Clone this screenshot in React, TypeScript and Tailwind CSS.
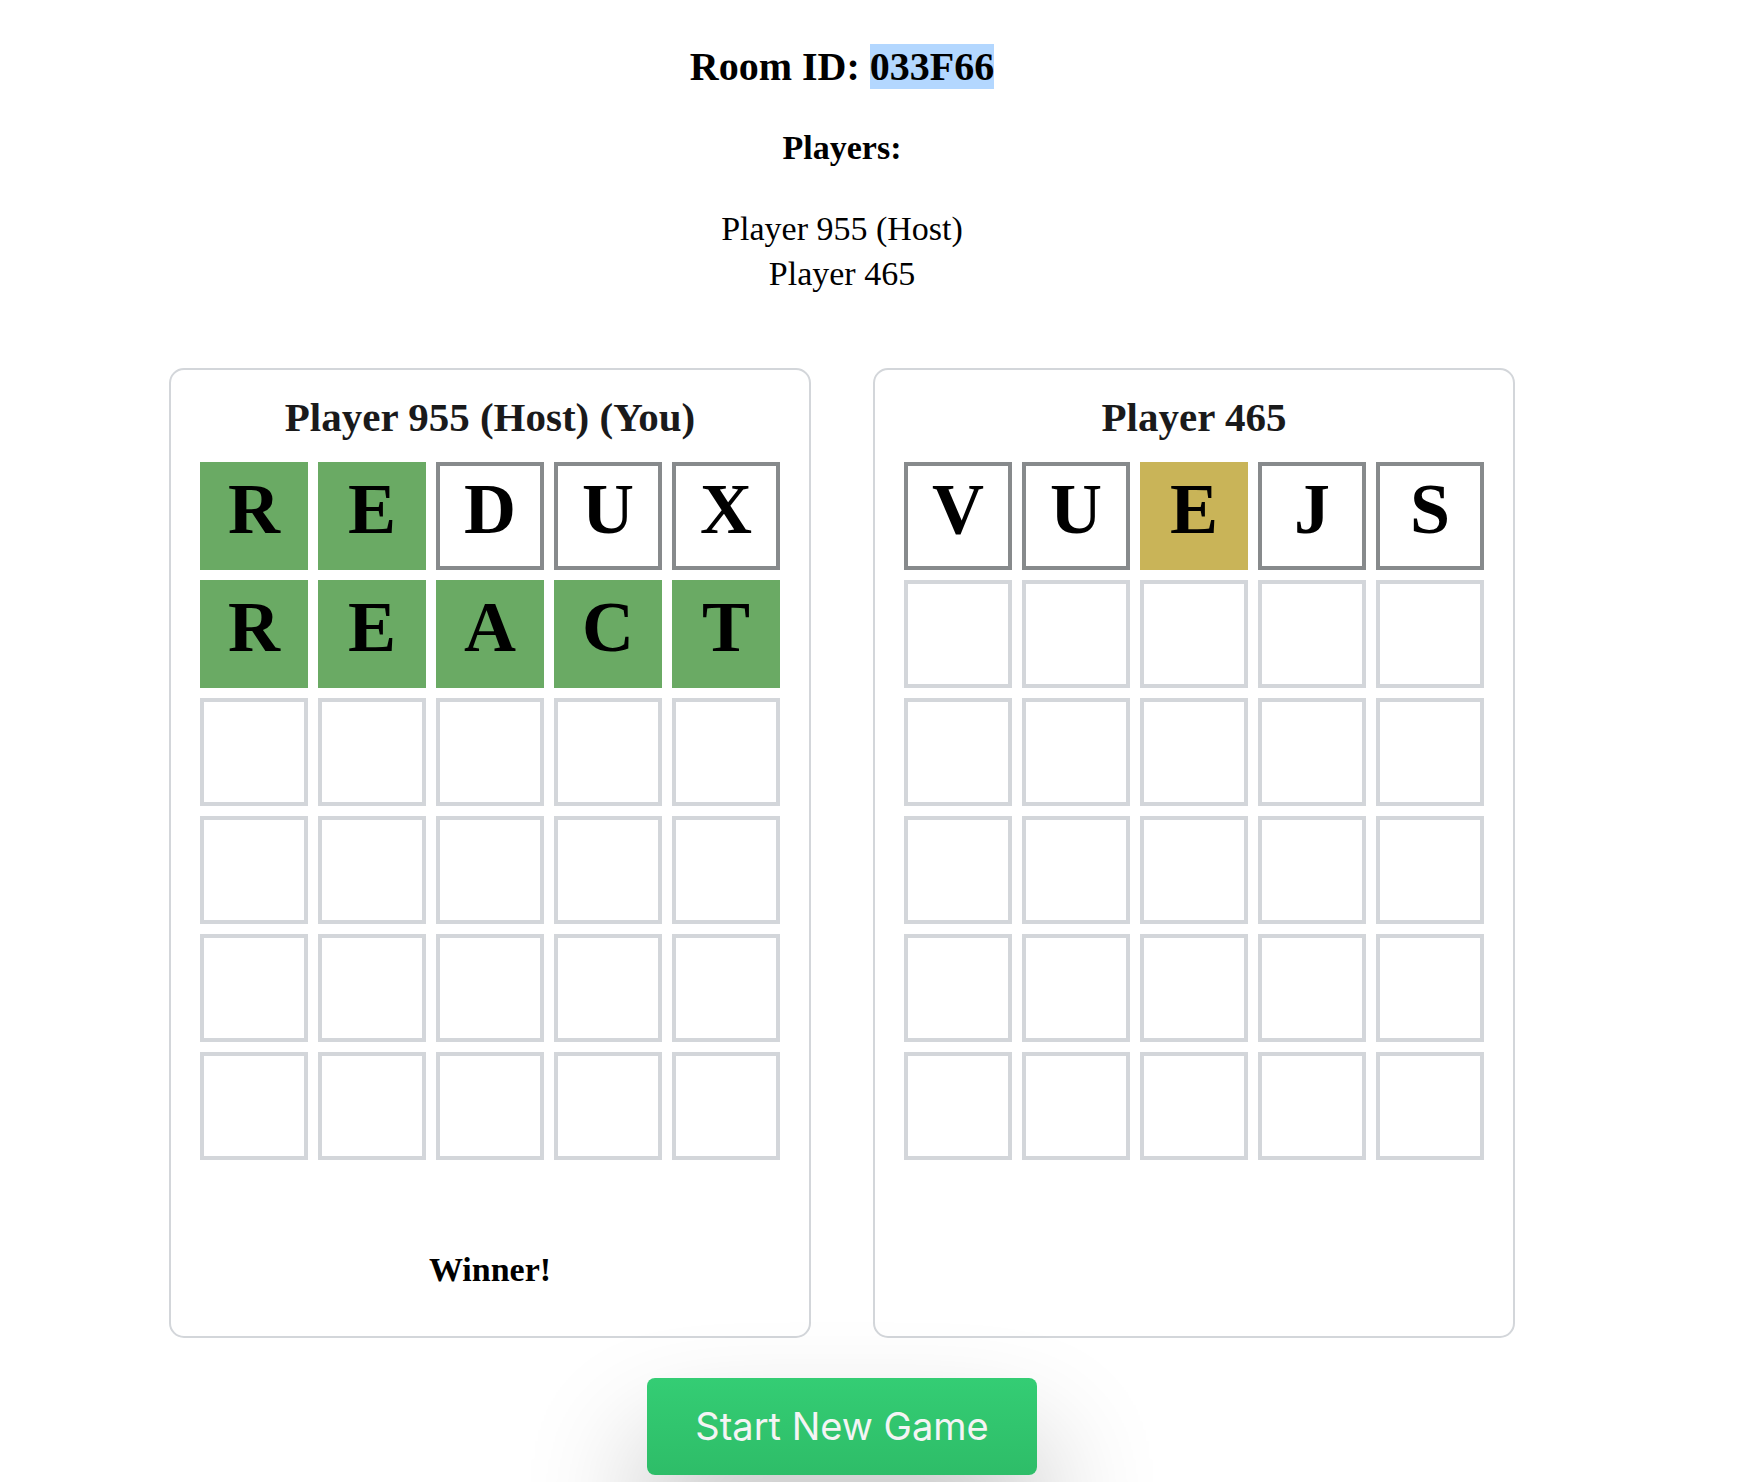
const serif = { fontFamily: '"Liberation Serif", "Times New Roman", serif' };

type Cell = { letter?: string; state: "correct" | "present" | "absent" | "empty" };

const emptyRow = (): Cell[] => Array.from({ length: 5 }, () => ({ state: "empty" as const }));

const row = (word: string, states: Cell["state"][]): Cell[] =>
  word.split("").map((letter, i) => ({ letter, state: states[i] }));

const boards: { name: string; rows: Cell[][]; winner: boolean }[] = [
  {
    name: "Player 955 (Host) (You)",
    winner: true,
    rows: [
      row("REDUX", ["correct", "correct", "absent", "absent", "absent"]),
      row("REACT", ["correct", "correct", "correct", "correct", "correct"]),
      emptyRow(),
      emptyRow(),
      emptyRow(),
      emptyRow(),
    ],
  },
  {
    name: "Player 465",
    winner: false,
    rows: [
      row("VUEJS", ["absent", "absent", "present", "absent", "absent"]),
      emptyRow(),
      emptyRow(),
      emptyRow(),
      emptyRow(),
      emptyRow(),
    ],
  },
];

function Tile({ cell }: { cell: Cell }) {
  const cls =
    cell.state === "correct"
      ? "bg-[#6aaa64]"
      : cell.state === "present"
        ? "bg-[#c9b458]"
        : cell.state === "absent"
          ? "bg-white border-4 border-[#878a8c]"
          : "bg-white border-4 border-[#d3d6da]";
  return (
    <div
      className={`w-[108px] h-[108px] flex items-center justify-center pb-[14px] text-[72px] font-bold text-black leading-none ${cls}`}
    >
      {cell.letter}
    </div>
  );
}

function Board({ name, rows, winner }: { name: string; rows: Cell[][]; winner: boolean }) {
  return (
    <div className="w-[642px] border-2 border-[#d3d6da] rounded-[15px] px-[29px] pt-[24px] pb-[46px] flex flex-col items-center bg-white">
      <h3 className="text-[41px] font-bold leading-[46px] text-[#1a1a1b] mb-[22px]">{name}</h3>
      <div className="grid grid-cols-5 gap-[10px]">
        {rows.map((r, i) => r.map((c, j) => <Tile key={`${i}-${j}`} cell={c} />))}
      </div>
      {winner && (
        <p className="mt-[90px] text-[34px] font-bold leading-[40px] text-black">Winner!</p>
      )}
    </div>
  );
}

export default function App() {
  return (
    <div className="w-[1684px] min-h-[1482px] bg-white flex flex-col items-center text-black" style={serif}>
      <h2 className="mt-[44px] text-[40px] font-bold leading-[46px]">
        Room ID: <span className="bg-[#b3d7ff]">033F66</span>
      </h2>
      <h3 className="mt-[38px] text-[34px] font-bold leading-[40px]">Players:</h3>
      <ul className="mt-[39px] text-[34px] leading-[44.5px] text-center">
        <li>Player 955 (Host)</li>
        <li>Player 465</li>
      </ul>
      <div className="mt-[72px] flex items-stretch gap-[62px]">
        {boards.map((b) => (
          <Board key={b.name} {...b} />
        ))}
      </div>
      <button
        className="mt-[40px] w-[390px] h-[97px] rounded-[8px] bg-gradient-to-b from-[#34cd74] to-[#2ebd68] text-[#f4f4f4] text-[38px] shadow-[0_70px_120px_rgba(0,0,0,0.3)]"
        style={{ fontFamily: 'Inter, "Liberation Sans", sans-serif' }}
      >
        Start New Game
      </button>
    </div>
  );
}
